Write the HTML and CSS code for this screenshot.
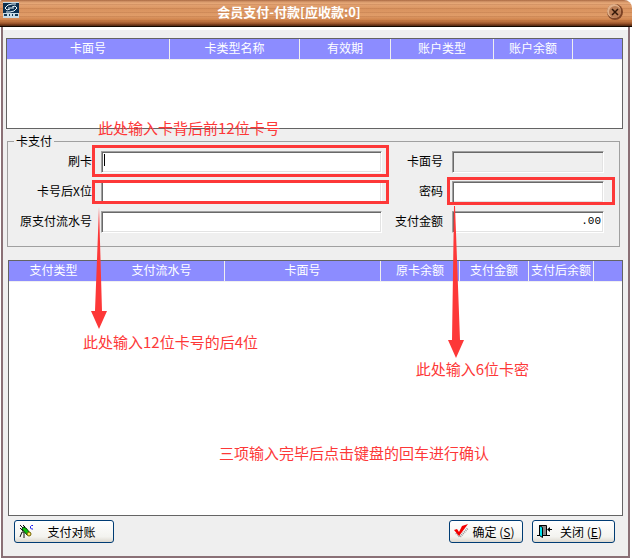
FILE: index.html
```html
<!DOCTYPE html>
<html lang="zh-CN">
  <head>
    <meta charset="UTF-8" />
    <meta name="viewport" content="width=device-width, initial-scale=1.0" />
    <title>会员支付-付款</title>
    <link rel="stylesheet" href="styles.css">
  </head>
  <body>
    <div class="window">
      <header class="titlebar">
        <svg class="logo" width="16" height="16" viewBox="0 0 16 16">
          <rect width="16" height="16" fill="#c9dde6" />
          <rect y="1" width="16" height="10" fill="#0c3150" />
          <path d="M9 2L5 3L2 6L4 8L7 7M7 10L11 9L14 6L12 4L9 5M5 6H11M9 2H13M3 10H7" fill="none" stroke="#e8f6fa" />
          <path d="M1 13H4M6 13H7M9 13H10M12 13H15" stroke="#123a57" stroke-width="2" />
        </svg>
        <h1>会员支付-付款[应收款:0]</h1>
        <button class="btn-close" aria-label="关闭窗口">
          <svg width="16" height="16" viewBox="0 0 16 16">
            <circle cx="8" cy="8" r="8" fill="#7d4325" />
            <circle cx="7" cy="7" r="7" fill="#e0b08a" />
            <circle cx="8" cy="8" r="6" fill="#b87c55" />
            <path d="M5 5L11 11M11 5L5 11" stroke="#321708" stroke-width="1.5" />
          </svg>
        </button>
      </header>

      <main class="content">
        <div class="panel panel-cards">
          <table>
            <colgroup>
              <col class="w-163"><col class="w-130"><col class="w-91"><col class="w-103"><col class="w-79"><col>
            </colgroup>
            <thead>
              <tr>
                <th>卡面号</th>
                <th>卡类型名称</th>
                <th>有效期</th>
                <th>账户类型</th>
                <th>账户余额</th>
                <th></th>
              </tr>
            </thead>
          </table>
        </div>

        <fieldset>
          <legend>卡支付</legend>
          <div class="form">
            <label for="swipe">刷卡</label>
            <input type="text" id="swipe" class="active" />
            <label for="cardNo">卡面号</label>
            <input type="text" id="cardNo" class="locked" readonly />

            <label for="lastDigits">卡号后X位</label>
            <input type="text" id="lastDigits" />
            <label for="password">密码</label>
            <input type="password" id="password" />

            <label for="serial">原支付流水号</label>
            <input type="text" id="serial" />
            <label for="amount">支付金额</label>
            <input type="text" id="amount" class="number" value=".00" />
          </div>
        </fieldset>

        <div class="panel panel-payments">
          <table>
            <colgroup>
              <col class="w-90"><col class="w-126"><col class="w-156"><col class="w-79"><col class="w-69"><col class="w-65"><col>
            </colgroup>
            <thead>
              <tr>
                <th>支付类型</th>
                <th>支付流水号</th>
                <th>卡面号</th>
                <th>原卡余额</th>
                <th>支付金额</th>
                <th>支付后余额</th>
                <th></th>
              </tr>
            </thead>
          </table>
        </div>

        <footer class="actions">
          <button class="btn btn-check">
            <svg width="15" height="15" viewBox="0 0 15 15">
              <path d="M1 1L5 5M1 4L4 7M4 1L6 3M3 8L1 13M5 8V14M3 8H5" fill="none" stroke="#111" />
              <path d="M4 3L7 4L11 9L8 11L3 5Z" fill="#0bc30b" stroke="#063806" />
              <circle cx="10" cy="10" r="2" fill="#ffef58" stroke="#6d5d00" />
              <path d="M14 1.5H12.500L11.500 2.500V4L12.500 5H14" fill="none" stroke="#1717f0" />
            </svg>
            <span>支付对账</span>
          </button>
          <button class="btn btn-ok">
            <svg width="15" height="15" viewBox="0 0 15 15">
              <path d="M2 9L6 13L14 4" fill="none" stroke="#999" stroke-width="2" stroke-dasharray="1 1" />
              <path d="M0 6L3 5L5 8L8 2L14 0L5 12Z" fill="#f40000" />
            </svg>
            <span>确定 (<u>S</u>)</span>
          </button>
          <button class="btn btn-exit">
            <svg width="15" height="15" viewBox="0 0 15 15">
              <path d="M2.500 1.500H9.500V11.500H2.500Z" fill="#888" stroke="#000" />
              <path d="M2.500 1.500L5.500 3.500V13.500L2.500 11.500Z" fill="#00e5ee" stroke="#000" />
              <path d="M0 11.500H3M9 11.500H13M11 5.500H15" stroke="#000" />
              <path d="M10 5.500L13 3V8Z" fill="#000" />
            </svg>
            <span>关闭 (<u>E</u>)</span>
          </button>
        </footer>
      </main>

      <!-- 操作说明标注 -->
      <div class="notes">
        <div class="box box-swipe"></div>
        <div class="box box-digits"></div>
        <div class="box box-password"></div>
        <svg class="arrow arrow-digits" width="16" height="122" viewBox="0 0 16 122">
          <path d="M8 0L11 104H16L8 122L0 104H4Z" fill="#fd3838" />
        </svg>
        <svg class="arrow arrow-password" width="16" height="152" viewBox="0 0 16 152">
          <path d="M6 0H7L12 134H16L8 152L0 134H4Z" fill="#fd3838" />
        </svg>
        <p class="note note-swipe">此处输入卡背后前12位卡号</p>
        <p class="note note-digits">此处输入12位卡号的后4位</p>
        <p class="note note-password">此处输入6位卡密</p>
        <p class="note note-confirm">三项输入完毕后点击键盘的回车进行确认</p>
      </div>
    </div>
  </body>
</html>
```

FILE: styles.css
```css
* {
  margin: 0;
  padding: 0;
  box-sizing: border-box;
}

body {
  font-family: 'Noto Sans CJK SC', sans-serif;
  font-size: 12px;
  line-height: 16px;
  color: #000;
  background: #fff;
}

.window {
  position: relative;
  display: flex;
  flex-direction: column;
  min-height: 100vh;
  padding-bottom: 1px;
}

.titlebar {
  display: flex;
  align-items: center;
  height: 27px;
  padding: 0 9px 2px 3px;
  border-bottom: 1px solid #120800;
  border-radius: 2px 8px 0 0;
  background:
    repeating-linear-gradient(rgba(110, 45, 10, 0.12) 0 1px, transparent 1px 4px),
    linear-gradient(#b87850 0%, #e6a878 12%, #d9925e 35%, #e09c68 60%, #ce814a 78%, #9c562c 90%, #4f250f 100%);
}

h1 {
  flex: 1;
  text-align: center;
  color: #fff;
  font-size: 13px;
  font-weight: 700;
  line-height: 20px;
  padding-right: 50px;
}

.logo {
  margin-right: 2px;
  margin-bottom: 4px;
}

.btn-close {
  width: 16px;
  height: 16px;
  border: none;
  background: none;
  cursor: pointer;
}

svg {
  display: block;
}

.content {
  flex: 1;
  display: flex;
  flex-direction: column;
  margin: 0 2px 0 1px;
  padding: 11px 5px 13px 3px;
  border: 2px solid #8a7076;
  border-top: none;
  background: linear-gradient(#fff 0 3px, #efefef 3px);
}

.panel {
  background: #fff;
  border: 1px solid #646464;
}

.panel-cards {
  height: 91px;
}

.panel-payments {
  flex: 1;
  min-height: 200px;
  margin: 13px 0 0 2px;
}

table {
  width: 100%;
  table-layout: fixed;
  border-collapse: separate;
  border-spacing: 0;
}

th {
  height: 21px;
  padding-bottom: 2px;
  overflow: hidden;
  white-space: nowrap;
  color: #fff;
  background: #8c8cff;
  border-right: 1px solid #efefef;
  border-bottom: 1px solid #efefef;
  font-weight: 400;
  text-align: center;
}

th:last-child {
  border-right: none;
}

.w-65 { width: 65px; }
.w-69 { width: 69px; }
.w-79 { width: 79px; }
.w-90 { width: 90px; }
.w-91 { width: 91px; }
.w-103 { width: 103px; }
.w-126 { width: 126px; }
.w-130 { width: 130px; }
.w-156 { width: 156px; }
.w-163 { width: 163px; }

fieldset {
  min-width: 0;
  margin: 4px 3px 0 1px;
  padding: 2px 15px 13px 1px;
  border: 1px solid #a0a0a0;
}

legend {
  margin-left: 5px;
  padding: 0 2px;
}

.form {
  display: grid;
  grid-template-columns: 84px 1fr 54px 152px;
  gap: 8px;
}

.form label {
  padding-right: 1px;
  line-height: 20px;
  text-align: right;
  white-space: nowrap;
}

.form input {
  width: 100%;
  min-width: 0;
  height: 22px;
  padding: 0 2px 3px;
  border: 1px solid;
  border-color: #a0a0a0 #fff #fff #a0a0a0;
  background-color: #fff;
  box-shadow: inset 1px 1px #696969, inset -1px -1px #e3e3e3;
  font: inherit;
  outline: none;
}

.form .active {
  background-image: linear-gradient(#000, #000);
  background-size: 1px 12px;
  background-position: 2px 2px;
  background-repeat: no-repeat;
}

.form .locked {
  background-color: #efefef;
}

.form .number {
  font-family: 'Liberation Mono', monospace;
  font-size: 11px;
  text-align: right;
}

.actions {
  display: flex;
  gap: 9px;
  margin-top: 4px;
  padding: 0 8px;
}

.btn {
  display: flex;
  align-items: center;
  height: 23px;
  padding: 0 4px;
  border: 1px solid #003c74;
  border-radius: 3px;
  background: linear-gradient(#fff, #f3f3ef 75%, #dcd8cf);
  color: #000;
  font: inherit;
  cursor: pointer;
}

.btn span {
  flex: 1;
  text-align: center;
  white-space: nowrap;
}

.btn-check {
  width: 100px;
  margin-right: auto;
}

.btn-ok {
  width: 74px;
}

.btn-exit {
  width: 83px;
}

.notes {
  position: absolute;
  inset: 0;
  color: #fd3838;
  pointer-events: none;
}

.box,
.arrow,
.note {
  position: absolute;
}

.box {
  border: 3px solid #fd3838;
}

.box-swipe {
  left: 92px;
  right: 243px;
  top: 145px;
  height: 32px;
}

.box-digits {
  left: 92px;
  right: 243px;
  top: 180px;
  height: 24px;
}

.box-password {
  right: 17px;
  top: 177px;
  width: 168px;
  height: 28px;
}

.arrow-digits {
  left: 91px;
  top: 207px;
}

.arrow-password {
  right: 168px;
  top: 206px;
}

.note {
  font-size: 15px;
  line-height: 20px;
  white-space: nowrap;
}

.note-swipe {
  left: 98px;
  top: 118px;
}

.note-digits {
  left: 83px;
  top: 332px;
}

.note-password {
  right: 103px;
  top: 359px;
}

.note-confirm {
  left: 219px;
  top: 443px;
}
```
